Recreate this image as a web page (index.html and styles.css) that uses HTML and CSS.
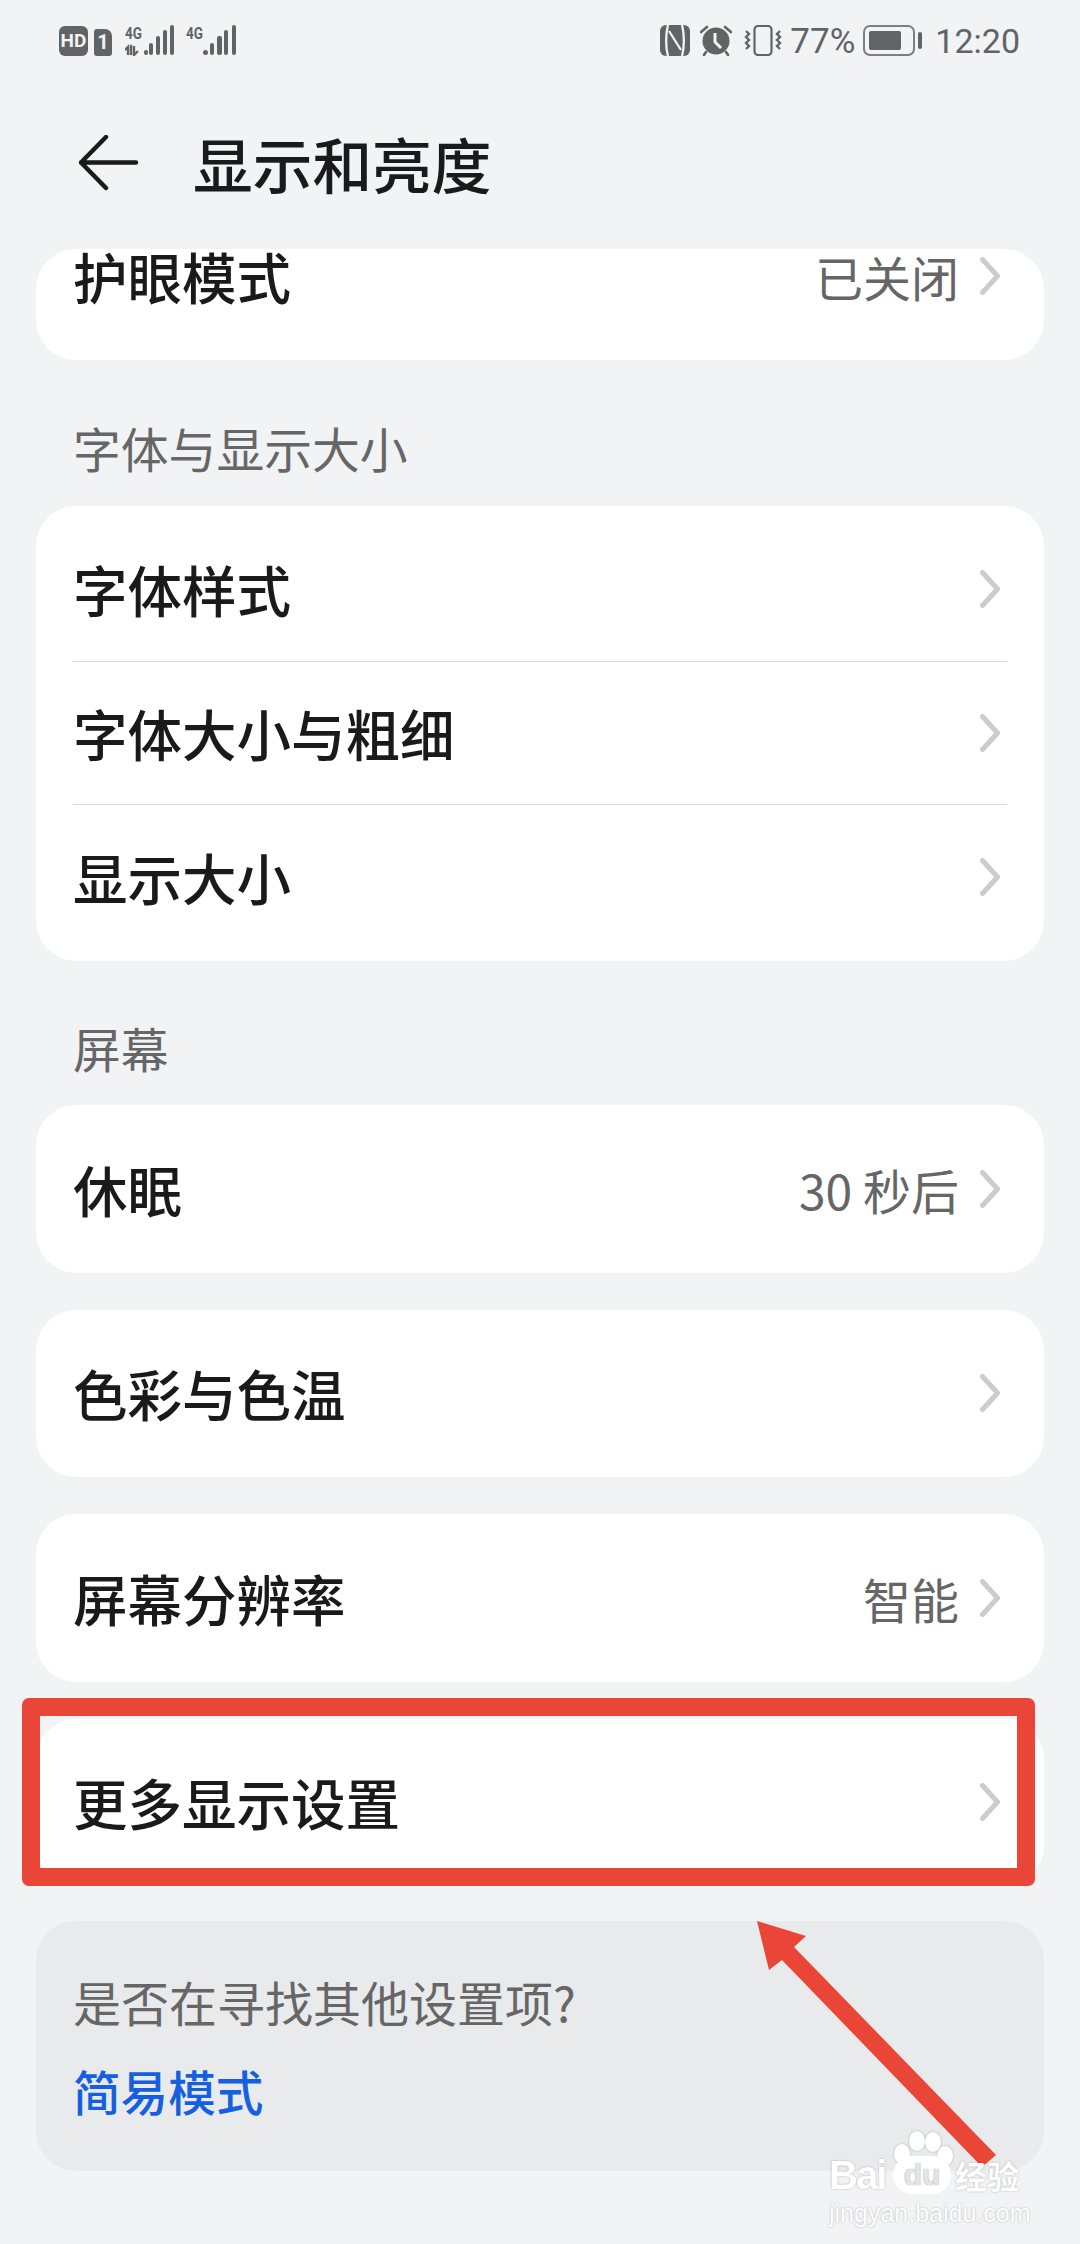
FILE: index.html
```html
<!DOCTYPE html>
<html lang="zh-CN">
<head>
    <meta charset="UTF-8">
    <title>显示和亮度</title>
    <link rel="stylesheet" href="styles.css">
</head>
<body>
<div class="page">
    <div class="status-bar">
        <div class="status-left">
            <span class="hd-badge">HD</span>
            <span class="sim-badge">1</span>
            <svg class="signal" width="49" height="31" viewBox="0 0 49 31">
                <text x="0" y="14" class="signal-label" textLength="17" lengthAdjust="spacingAndGlyphs">4G</text>
                <path d="M3 30v-8l-3 3M5 21h1v9M9 21v9l4-4" class="signal-arrows"/>
                <rect x="19" y="25" width="4" height="5" rx="2"/>
                <rect x="24" y="18" width="4" height="12" rx="2"/>
                <rect x="31" y="11" width="4" height="19" rx="2"/>
                <rect x="38" y="5" width="4" height="25" rx="2"/>
                <rect x="45" y="0" width="4" height="30" rx="2"/>
            </svg>
            <svg class="signal" width="50" height="31" viewBox="0 0 50 31">
                <text x="0" y="14" class="signal-label" textLength="17" lengthAdjust="spacingAndGlyphs">4G</text>
                <rect x="17" y="25" width="5" height="5" rx="2.5"/>
                <rect x="24" y="18" width="4" height="12" rx="2"/>
                <rect x="31" y="11" width="5" height="19" rx="2"/>
                <rect x="38" y="5" width="4" height="25" rx="2"/>
                <rect x="46" y="0" width="4" height="30" rx="2"/>
            </svg>
        </div>
        <div class="status-right">
            <svg class="nfc" width="30" height="31" viewBox="0 0 30 31">
                <rect width="30" height="31" rx="6"/>
                <path d="M8 0C5.500 9 5.500 22 8 31M9 6L21 25M22 0C24.500 9 24.500 22 22 31" fill="none" stroke="#f1f3f5" stroke-width="2.300"/>
            </svg>
            <svg class="alarm" width="32" height="31" viewBox="0 0 32 31">
                <circle cx="16" cy="16" r="13.500"/>
                <path d="M1 7l6-5M31 7l-6-5M6 27l-2 3M26 27l2 3" fill="none" stroke="#626365" stroke-width="2.600" stroke-linecap="round"/>
                <path d="M15 8v9l6 6" fill="none" stroke="#f1f3f5" stroke-width="3"/>
            </svg>
            <svg class="vibrate" width="38" height="31" viewBox="0 0 38 31">
                <rect x="10.500" y="1" width="17" height="29" rx="3.500" fill="none" stroke="#626365" stroke-width="2.200"/>
                <path d="M2 6l3 3-3 3 3 3-3 3 3 3-3 3M36 6l-3 3 3 3-3 3 3 3-3 3 3 3" fill="none" stroke="#626365" stroke-width="2.400"/>
            </svg>
            <span class="status-text battery-pct">77%</span>
            <svg class="battery" width="59" height="32" viewBox="0 0 59 32">
                <rect x="1" y="1" width="50" height="29" rx="6" fill="none" stroke="#7d7e80" stroke-width="2"/>
                <rect x="6" y="6" width="32" height="19" rx="2"/>
                <rect x="55" y="7" width="4" height="17" rx="2"/>
            </svg>
            <span class="status-text clock">12:20</span>
        </div>
    </div>

    <div class="title-bar">
        <svg class="back-icon" width="60" height="56" viewBox="0 0 60 56">
            <path d="M27 2L2 27.500 27 53M2 27.500h55" fill="none" stroke="#1a1a1a" stroke-width="4.500" stroke-linecap="round" stroke-linejoin="round"/>
        </svg>
        <h1 class="page-title">显示和亮度</h1>
    </div>

    <div class="card card-clipped">
        <div class="row row-clipped">
            <span class="row-title">护眼模式</span>
            <span class="row-value">已关闭</span>
            <svg class="chevron" width="20" height="38" viewBox="0 0 20 38"><path d="M2.500 2.500L17.500 19 2.500 35.500"/></svg>
        </div>
    </div>

    <div class="section-label section-first">字体与显示大小</div>
    <div class="card card-list">
        <div class="row row-list">
            <span class="row-title">字体样式</span>
            <svg class="chevron" width="20" height="38" viewBox="0 0 20 38"><path d="M2.500 2.500L17.500 19 2.500 35.500"/></svg>
        </div>
        <div class="row row-list">
            <span class="row-title">字体大小与粗细</span>
            <svg class="chevron" width="20" height="38" viewBox="0 0 20 38"><path d="M2.500 2.500L17.500 19 2.500 35.500"/></svg>
        </div>
        <div class="row row-list">
            <span class="row-title">显示大小</span>
            <svg class="chevron" width="20" height="38" viewBox="0 0 20 38"><path d="M2.500 2.500L17.500 19 2.500 35.500"/></svg>
        </div>
    </div>

    <div class="section-label">屏幕</div>
    <div class="card-stack">
        <div class="card row">
            <span class="row-title">休眠</span>
            <span class="row-value">30 秒后</span>
            <svg class="chevron" width="20" height="38" viewBox="0 0 20 38"><path d="M2.500 2.500L17.500 19 2.500 35.500"/></svg>
        </div>
        <div class="card row">
            <span class="row-title">色彩与色温</span>
            <svg class="chevron" width="20" height="38" viewBox="0 0 20 38"><path d="M2.500 2.500L17.500 19 2.500 35.500"/></svg>
        </div>
        <div class="card row">
            <span class="row-title">屏幕分辨率</span>
            <span class="row-value">智能</span>
            <svg class="chevron" width="20" height="38" viewBox="0 0 20 38"><path d="M2.500 2.500L17.500 19 2.500 35.500"/></svg>
        </div>
        <div class="card row">
            <span class="row-title">更多显示设置</span>
            <svg class="chevron" width="20" height="38" viewBox="0 0 20 38"><path d="M2.500 2.500L17.500 19 2.500 35.500"/></svg>
        </div>
        <div class="card help-card">
            <p class="help-text">是否在寻找其他设置项?</p>
            <p class="help-link">简易模式</p>
        </div>
    </div>

    <!-- annotation drawn over the screenshot -->
    <div class="red-box"></div>
    <svg class="red-arrow" width="260" height="270" viewBox="740 1910 260 270">
        <path d="M757 1921L806 1936 794 1947 996 2155 982 2167 782 1960 769 1970Z" fill="#e94637"/>
    </svg>

    <div class="watermark">
        <svg class="paw" width="62" height="36" viewBox="0 0 62 36">
            <ellipse cx="10" cy="24" rx="8" ry="10"/>
            <ellipse cx="25" cy="11" rx="8" ry="10"/>
            <ellipse cx="41" cy="12" rx="8" ry="10"/>
            <ellipse cx="53" cy="26" rx="8" ry="10"/>
        </svg>
        <div class="wm-main">
            <span class="wm-bai">Bai</span>
            <span class="wm-du">du</span>
            <span class="wm-cn">经验</span>
        </div>
        <div class="wm-url">jingyan.baidu.com</div>
    </div>
</div>
</body>
</html>
```

FILE: styles.css
```css
* {
    box-sizing: border-box;
}

body {
    margin: 0;
    background: #f1f3f5;
    font-family: "Noto Sans CJK SC", "Noto Sans", sans-serif;
    color: #1a1a1a;
}

.page {
    position: relative;
    width: 1080px;
    height: 2244px;
    overflow: hidden;
}

/* status bar */
.status-bar {
    height: 80px;
    padding: 25px 60px 0 59px;
    display: flex;
    justify-content: space-between;
    align-items: flex-start;
}

.status-left,
.status-right {
    display: flex;
    align-items: flex-start;
}

.status-bar svg {
    fill: #626365;
    display: block;
}

.hd-badge {
    width: 29px;
    height: 30px;
    margin-top: 1px;
    border-radius: 6px;
    background: #626365;
    color: #f1f3f5;
    font: 700 19px/30px "Roboto", sans-serif;
    text-align: center;
}

.sim-badge {
    width: 18px;
    height: 27px;
    margin: 4px 13px 0 6px;
    border-radius: 3px 7px 3px 3px;
    background: #626365;
    color: #f1f3f5;
    font: 700 20px/27px "Roboto", sans-serif;
    text-align: center;
}

.signal {
    margin-right: 12px;
}

.signal-label {
    font: 700 16px "Roboto", sans-serif;
    fill: #626365;
}

.signal-arrows {
    fill: none;
    stroke: #626365;
    stroke-width: 2.4;
}

.nfc {
    margin-right: 10px;
}

.alarm {
    margin-right: 12px;
}

.vibrate {
    margin-right: 8px;
}

.status-text {
    font: 400 35px/31px "Roboto", sans-serif;
    color: #626365;
    padding-top: 1px;
}

.clock {
    font-size: 34px;
}

.battery-pct {
    margin-right: 8px;
}

.battery {
    margin-right: 13px;
}

/* title */
.title-bar {
    height: 169px;
    padding: 0 0 0 79px;
    display: flex;
    align-items: flex-start;
}

.back-icon {
    margin-top: 55px;
}

.page-title {
    margin: 41px 0 0 54px;
    font-size: 59.7px;
    line-height: 84px;
    font-weight: 500;
}

/* cards */
.card {
    margin: 0 36px;
    background: #fff;
    border-radius: 40px;
}

.card-clipped {
    height: 111px;
}

.row {
    height: 167.5px;
    padding: 0 44px 0 37px;
    display: flex;
    align-items: center;
}

.row-clipped {
    height: 54px;
}

.row-title {
    flex: 1;
    font-size: 54.5px;
    font-weight: 500;
    line-height: 62px;
}

.row-value {
    margin-right: 21px;
    font-size: 48px;
    color: #666;
}

.chevron {
    fill: none;
    stroke: #ccc;
    stroke-width: 5;
    stroke-linecap: round;
    stroke-linejoin: round;
}

.section-label {
    height: 144.5px;
    padding: 57.5px 0 0 73px;
    font-size: 47.8px;
    line-height: 60px;
    color: #666;
}

.section-first {
    height: 146px;
}

.card-list {
    padding: 12px 0;
}

.row-list {
    height: 143.5px;
    margin-left: 37px;
    margin-right: 37px;
    padding: 0 7px 0 0;
    border-bottom: 1.5px solid #d9d9d9;
}

.row-list:last-child {
    border-bottom: none;
}

.card-stack {
    display: flex;
    flex-direction: column;
    gap: 37px;
}

.help-card {
    height: 250px;
    margin-top: -2px;
    padding: 48px 37px 0;
    background: #e9eaec;
}

.help-text {
    margin: 0;
    font-size: 48px;
    line-height: 64px;
    color: #666;
}

.help-link {
    margin: 26px 0 0;
    font-size: 47.6px;
    font-weight: 500;
    line-height: 64px;
    color: #1560e0;
}

/* red annotation over the page */
.red-box {
    position: absolute;
    left: 22px;
    top: 1698px;
    width: 1013px;
    height: 188px;
    border: 18px solid #e94637;
    border-radius: 7px;
}

.red-arrow {
    position: absolute;
    left: 740px;
    top: 1910px;
}

/* watermark */
.watermark {
    position: absolute;
    left: 829px;
    top: 2130px;
    width: 195px;
    color: #fff;
    text-shadow: 0 0 2px rgba(0, 0, 0, .3);
}

.paw {
    position: absolute;
    left: 63px;
    top: 0;
    fill: #fff;
    filter: drop-shadow(0 0 1px rgba(0, 0, 0, .25));
}

.wm-main {
    height: 42px;
    margin-top: 24px;
    display: flex;
    align-items: center;
    white-space: nowrap;
}

.wm-bai {
    width: 64px;
    font: 700 40px/42px "Liberation Sans", sans-serif;
    letter-spacing: -2px;
}

.wm-du {
    position: relative;
    width: 58px;
    height: 38px;
    margin-right: 4px;
    border-radius: 20px;
    background: #fff;
    color: #e4e5e7;
    font: 700 30px/38px "Liberation Sans", sans-serif;
    text-align: center;
    text-shadow: 0 0 1px rgba(0, 0, 0, .5);
}

.wm-cn {
    font: 700 32px/42px "Noto Sans CJK SC", sans-serif;
}

.wm-url {
    margin-top: 1px;
    font: 400 25px/32px "Liberation Sans", sans-serif;
    white-space: nowrap;
}
```
